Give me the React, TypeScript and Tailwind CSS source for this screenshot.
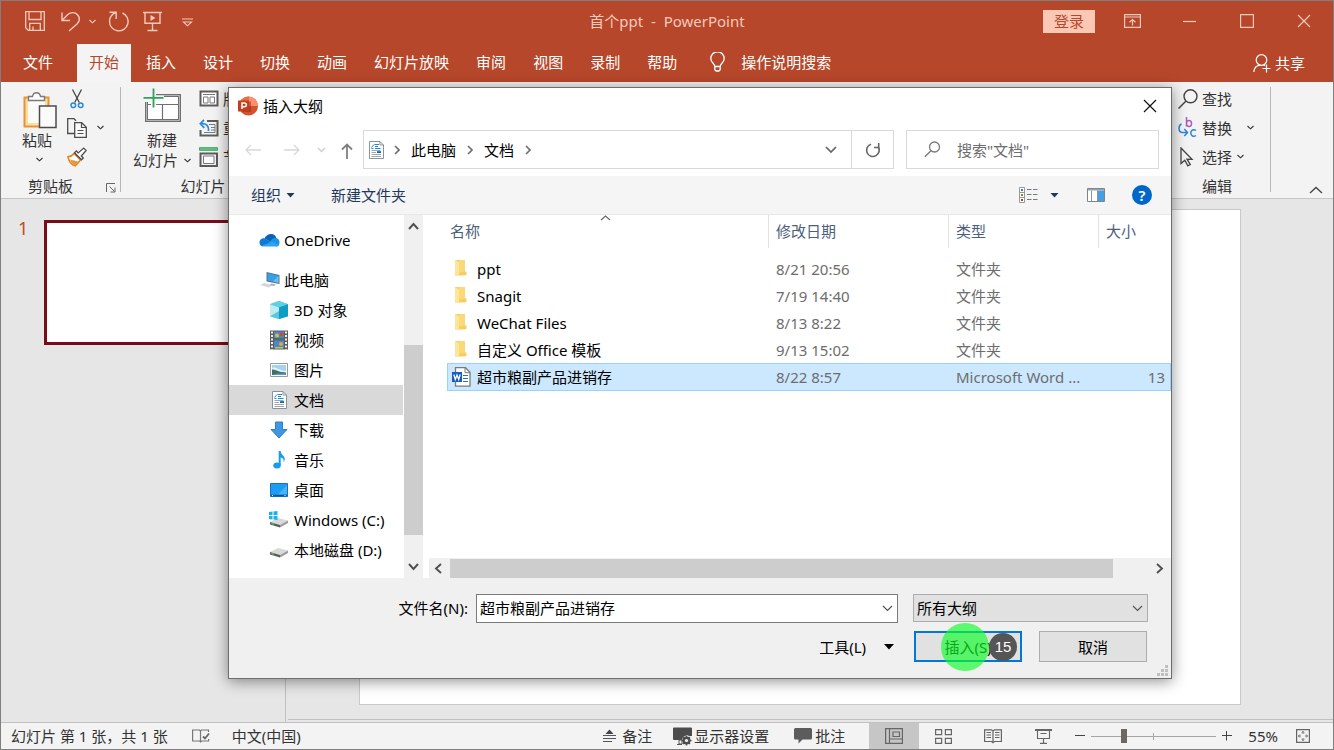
import type { ReactNode } from "react";

interface IconProps {
  w: number;
  h: number;
  children: ReactNode;
  className?: string;
}

const Icon = ({ w, h, children, className = "" }: IconProps) => (
  <svg
    width={w}
    height={h}
    viewBox={`0 0 ${w} ${h}`}
    fill="none"
    className={`shrink-0 ${className}`}
    aria-hidden="true"
  >
    {children}
  </svg>
);

const SmallChevron = ({ className = "" }: { className?: string }) => (
  <Icon w={7} h={5} className={className}>
    <path d="M0.5 1l3 2.8L6.5 1" stroke="currentColor" strokeWidth="1.1" />
  </Icon>
);

const Caret = ({ className = "" }: { className?: string }) => (
  <Icon w={9} h={5} className={className}>
    <path d="M0.5 0h8l-4 4.5z" fill="currentColor" />
  </Icon>
);

const WideChevron = ({ className = "" }: { className?: string }) => (
  <Icon w={11} h={7} className={className}>
    <path d="M1 1l4.5 4.5L10 1" stroke="currentColor" strokeWidth="1.2" />
  </Icon>
);

const CrumbChevron = () => (
  <Icon w={6} h={10} className="text-[#6d6d6d]">
    <path d="M1 1l4 4-4 4" stroke="currentColor" strokeWidth="1.6" />
  </Icon>
);

const DocumentIcon = () => (
  <Icon w={15} h={18}>
    <path d="M.5.5h10.500l3.500 3.500v13.500H.5z" fill="#fff" stroke="#8b9298" />
    <path d="M11 .5V4h3.500" stroke="#8b9298" />
    <path d="M5.500 3.500H10M2.500 7.500h2M6 7.500h5.500M8 10.500h4" stroke="#1a8ad8" />
    <path d="M2.500 6.500l2.500-3M6 5.500h3" stroke="#1a8ad8" />
    <path d="M8 11.500h4" stroke="#345b7c" />
    <path d="M2.500 9.500h9M2.500 11.500h4.500M2.500 13.500h9.500M2.500 15.500h9.500" stroke="#9aa8b3" />
  </Icon>
);

const WindowTitleBar = () => (
  <header className="grid h-10 grid-cols-[1fr_auto_1fr] items-center text-[#f6c9bb]">
    <div className="flex items-center pl-6">
      <button type="button" aria-label="保存">
        <Icon w={20} h={20}>
          <path d="M.7.7h18.600v18.600H3.200L.7 16.800z" stroke="currentColor" strokeWidth="1.300" />
          <path d="M4 .7v7.800h12V.7M4.700 19v-6.700h10.600V19M8 19v-3.500" stroke="currentColor" strokeWidth="1.300" />
        </Icon>
      </button>
      <button type="button" aria-label="撤消" className="ml-4">
        <Icon w={20} h={21}>
          <path d="M1 1.500v8h8M1.500 9L6 4.200C9 1 14 .8 16.500 3.800c2.600 3.100 2 6.700-.5 9.200l-8 7" stroke="currentColor" strokeWidth="1.400" />
        </Icon>
      </button>
      <button type="button" aria-label="撤消选项" className="ml-[8px]">
        <SmallChevron />
      </button>
      <button type="button" aria-label="重复" className="ml-3">
        <Icon w={22} h={21}>
          <path d="M1.500 1.200h6.700v6.800M8 1.500C4 3 1.500 6.500 1.500 10.500a9.300 9.300 0 1 0 13-8.500" stroke="currentColor" strokeWidth="1.400" />
        </Icon>
      </button>
      <button type="button" aria-label="从头开始" className="ml-[13px]">
        <Icon w={19} h={21}>
          <path d="M0 1.500h19M2 1.500v10.700h15V1.500M9.500 12v7M4.500 19.500h10" stroke="currentColor" strokeWidth="1.400" />
          <path d="M7.500 4l5 3-5 3z" fill="currentColor" />
        </Icon>
      </button>
      <button type="button" aria-label="自定义快速访问工具栏" className="ml-5 pt-[2px]">
        <Icon w={11} h={9}>
          <path d="M0 1h11M1.500 4l4 3.800L9.500 4z" stroke="currentColor" strokeWidth="1.100" />
        </Icon>
      </button>
    </div>
    <h1 className="whitespace-pre text-[15px] leading-5">首个ppt  -  PowerPoint</h1>
    <div className="flex items-center justify-end pr-px">
      <button type="button" className="mr-[9px] h-[23px] w-[52px] bg-[#fcc8b6] text-[15px] leading-5 text-[#b7472a]">
        登录
      </button>
      <button type="button" aria-label="功能区显示选项" className="flex h-10 w-[57px] items-center justify-center">
        <Icon w={17} h={14}>
          <path d="M.6.600h15.800v12.800H.6zM.6 3h15.800M8.500 11.500V5.500M5.500 8.200l3-2.700 3 2.700" stroke="currentColor" strokeWidth="1.200" />
        </Icon>
      </button>
      <button type="button" aria-label="最小化" className="flex h-10 w-[57px] items-center justify-center">
        <Icon w={13} h={3}>
          <path d="M0 1.500h13" stroke="currentColor" strokeWidth="1.200" />
        </Icon>
      </button>
      <button type="button" aria-label="最大化" className="flex h-10 w-[57px] items-center justify-center">
        <Icon w={14} h={14}>
          <path d="M.6.600h12.800v12.800H.6z" stroke="currentColor" strokeWidth="1.200" />
        </Icon>
      </button>
      <button type="button" aria-label="关闭" className="flex h-10 w-[57px] items-center justify-center">
        <Icon w={14} h={14}>
          <path d="M1 1l12 12M13 1L1 13" stroke="currentColor" strokeWidth="1.200" />
        </Icon>
      </button>
    </div>
  </header>
);

const tabs = ["开始", "插入", "设计", "切换", "动画", "幻灯片放映", "审阅", "视图", "录制", "帮助"];

const RibbonTabs = () => (
  <nav className="flex items-end pt-[3px] pr-7 pl-[10px] text-[15px] leading-5 whitespace-nowrap text-white">
    <button type="button" className="mr-3 h-[38px] px-3 pb-[2px]">
      文件
    </button>
    <div className="flex gap-[3px]">
      {tabs.map((tab) => (
        <button
          key={tab}
          type="button"
          className={`h-[38px] px-3 pb-[2px] ${tab === "开始" ? "bg-[#f4f4f4] text-[#b7472a]" : ""}`}
        >
          {tab}
        </button>
      ))}
    </div>
    <button type="button" className="ml-[21px] flex h-[38px] items-center gap-4 pb-[2px]">
      <Icon w={15} h={20}>
        <path d="M4.800 14.500c0-3-4-3.700-4-8a6.700 6.700 0 0 1 13.400 0c0 4.300-4 5-4 8v3.200L8.800 19H6.200l-1.400-1.300zM4.800 14.500h5.400" stroke="currentColor" strokeWidth="1.300" />
      </Icon>
      操作说明搜索
    </button>
    <button type="button" className="ml-auto flex h-[38px] items-center gap-1">
      <Icon w={18} h={19}>
        <circle cx="8.500" cy="6" r="5.300" stroke="currentColor" strokeWidth="1.200" />
        <path d="M.8 18c.4-4 3-6.500 6.500-6.800M10.500 10.800l1.500.9M13.500 10.500v8M9.500 14.500h8" stroke="currentColor" strokeWidth="1.200" />
      </Icon>
      共享
    </button>
  </nav>
);

const RibbonDivider = () => <div className="mt-[5px] h-[105px] w-px shrink-0 self-start bg-[#b8b8b8]" />;

const ClipboardGroup = () => (
  <section className="flex w-[119px] shrink-0 flex-col justify-between">
    <div className="flex">
      <button type="button" className="ml-[21px] flex flex-col items-start pt-[9px]">
        <Icon w={36} h={38}>
          <path d="M2.500 6.500h24v29h-24z" fill="#fbdf9d" stroke="#e8933a" strokeWidth="2" />
          <path d="M6 7h17v25H6z" fill="#fafafa" />
          <path d="M6.500 9.500V5.500h4C11 3 12.500 1.700 14.500 1.700S18 3 18.500 5.500h4v4z" fill="#fff" stroke="#7a7a7a" strokeWidth="1.400" />
          <path d="M17.500 15h16.500v21.500H17.500z" fill="#fafafa" stroke="#4c4c4c" strokeWidth="1.500" />
        </Icon>
        <span className="mt-px">粘贴</span>
        <SmallChevron className="mt-[7px] ml-[14px]" />
      </button>
      <div className="ml-[9px] flex flex-col pt-[2px]">
        <button type="button" aria-label="剪切" className="flex h-[29px] w-[20px] items-center justify-center">
          <Icon w={14} h={20}>
            <path d="M2.500.500l6.800 13M11.500.500L4.700 13.500" stroke="#444" strokeWidth="1.300" />
            <circle cx="3.300" cy="16.300" r="2.300" stroke="#2b88d8" strokeWidth="1.500" />
            <circle cx="10.700" cy="16.300" r="2.300" stroke="#2b88d8" strokeWidth="1.500" />
          </Icon>
        </button>
        <button type="button" aria-label="复制" className="flex h-[29px] items-center gap-[10px]">
          <Icon w={20} h={20}>
            <path d="M7 15.500H.7V.700h6.300l2 2" stroke="#4c4c4c" strokeWidth="1.300" />
            <path d="M7.700 4.700h7l4.600 4.600v10H7.700z" fill="#fafafa" stroke="#4c4c4c" strokeWidth="1.300" />
            <path d="M14.500 4.700v4.800h4.800M10.500 12.500h6M10.500 15.500h6" stroke="#4c4c4c" strokeWidth="1.200" />
          </Icon>
          <SmallChevron />
        </button>
        <button type="button" aria-label="格式刷" className="flex h-[29px] w-[20px] items-center">
          <Icon w={20} h={20}>
            <path d="M7 6.500l6.500 6.500-5.200 5.800C5 18 2 14.500 1 9.800c2.600 0 4.400-1.300 6-3.300z" fill="#fff" stroke="#e57d1a" strokeWidth="1.500" />
            <path d="M3 12.500l8 2-3 4C5.800 17.500 4 15.500 3 12.500z" fill="#e8953a" />
            <path d="M7.500 5.800l7 7 1.800-1.800-2-2 4.800-5.500-2.400-2.400-5.500 4.800-1.800-1.900z" fill="#fff" stroke="#4c4c4c" strokeWidth="1.300" />
          </Icon>
        </button>
      </div>
    </div>
    <div className="mb-[2px] flex h-5 items-center justify-between pr-1 pl-[27px]">
      <span>剪贴板</span>
      <button type="button" aria-label="剪贴板选项" className="pt-[3px]">
        <Icon w={10} h={10}>
          <path d="M.5 9V.500H9M3.500 3.500l5 5M9 4.500V9H4.500" stroke="#666" />
        </Icon>
      </button>
    </div>
  </section>
);

const SlidesGroup = () => (
  <section className="flex w-[164px] shrink-0 flex-col justify-between">
    <div className="flex">
      <button type="button" className="ml-3 flex w-[58px] flex-col items-center pt-[6px]">
        <Icon w={38} h={35}>
          <path d="M3.500 7.500h33v25h-33z" fill="#fff" stroke="#707070" strokeWidth="3" />
          <path d="M3.500 7.500h33v25h-33z" stroke="#b5b5b5" />
          <path d="M5 16.500h30M19.500 16.500V31" stroke="#707070" strokeWidth="1.200" />
          <path d="M0 0h20v6H0zM0 6h8v8H0z" fill="#f3f3f3" />
          <path d="M8 5h5v14H8zM2 7.500h19v5H2z" fill="#f6f6f6" />
          <path d="M10.500.500v19M.5 9.800h20" stroke="#2fa15c" strokeWidth="1.800" />
        </Icon>
        <span className="mt-[7px]">新建</span>
        <span className="flex items-center gap-[6px]">
          幻灯片
          <SmallChevron />
        </span>
      </button>
      <div className="ml-[8px] flex flex-col pt-[2px] whitespace-nowrap">
        <button type="button" className="flex h-[29px] items-center gap-1">
          <Icon w={20} h={17}>
            <path d="M1.500 1.500h17v14h-17z" fill="#fff" stroke="#5c5c5c" strokeWidth="2" />
            <path d="M4 4.500h12M4.500 7h4.500v6H4.500zM11 7h4.500v6H11z" stroke="#7a7a7a" />
          </Icon>
          版式
        </button>
        <button type="button" className="flex h-[29px] items-center gap-1">
          <Icon w={20} h={18}>
            <path d="M8 2h10.500v14.500h-17V11" stroke="#5c5c5c" strokeWidth="2" />
            <path d="M10 5.500h6v8H5M12 8.500h4M12 11h4" stroke="#7a7a7a" />
            <path d="M5 .800L1.300 4.800l4 4M1.500 4.800c5-.8 8.500 1.500 8 7.200" stroke="#2b88d8" strokeWidth="1.700" />
          </Icon>
          重置
        </button>
        <button type="button" className="flex h-[29px] items-center gap-1">
          <Icon w={20} h={20}>
            <path d="M.5.700h18v2.600H.5z" fill="#6cc08b" stroke="#3da865" />
            <path d="M1.500 6.500h16.500v12.500H1.500z" stroke="#5c5c5c" strokeWidth="2" />
            <path d="M4.500 9h10.500v7.500H4.500z" fill="#fff" stroke="#7a7a7a" />
          </Icon>
          节
        </button>
      </div>
    </div>
    <span className="mb-[2px] text-center">幻灯片</span>
  </section>
);

const EditingGroup = () => (
  <section className="flex w-[92px] shrink-0 flex-col justify-between whitespace-nowrap">
    <div className="flex flex-col pt-[2px]">
      <button type="button" className="flex h-[29px] items-center gap-1">
        <Icon w={20} h={20}>
          <circle cx="12.500" cy="7.300" r="6.500" stroke="#444" strokeWidth="1.400" />
          <path d="M8 12l-7.500 7.500" stroke="#444" strokeWidth="1.500" />
        </Icon>
        查找
      </button>
      <button type="button" className="flex h-[29px] items-center gap-1">
        <Icon w={20} h={21}>
          <path d="M8.500 0v9.500M8.500 6.500c0-4 5-4 5 0s-5 4-5 0" stroke="#a860b8" strokeWidth="1.500" />
          <path d="M18 13.500c-2.500-1.800-5.200-.3-5.200 2.500s2.700 4.300 5.200 2.500" stroke="#2b88d8" strokeWidth="1.500" />
          <path d="M3.500 7C.3 8 0 15 4 15.500h5M6.300 12L9.500 15.500l-3.200 3.500" stroke="#2b88d8" strokeWidth="1.500" />
        </Icon>
        替换
        <SmallChevron className="ml-[11px]" />
      </button>
      <button type="button" className="flex h-[29px] items-center gap-1">
        <Icon w={20} h={20}>
          <path d="M3 1l11 11.300-5-.2 3.300 5.500-2.500 1.300-3-5.700L3 16.500z" stroke="#444" strokeWidth="1.300" />
        </Icon>
        选择
        <SmallChevron className="ml-px" />
      </button>
    </div>
    <span className="mb-[2px] pl-6">编辑</span>
  </section>
);

const Ribbon = () => (
  <div className="flex h-[117px] border-b border-[#c6c6c6] bg-[#f3f3f3] text-[15px] leading-5 text-[#333]">
    <ClipboardGroup />
    <RibbonDivider />
    <SlidesGroup />
    <RibbonDivider />
    <div className="ml-auto flex">
      <EditingGroup />
      <RibbonDivider />
      <div className="flex w-[62px] items-end justify-end pr-[10px] pb-[4px]">
        <button type="button" aria-label="折叠功能区">
          <Icon w={14} h={8}>
            <path d="M1 7l6-5.500L13 7" stroke="#444" strokeWidth="1.300" />
          </Icon>
        </button>
      </div>
    </div>
  </div>
);

const Workspace = () => (
  <main className="flex flex-1 bg-[#e6e6e6]">
    <aside className="flex w-[285px] shrink-0 gap-[16px] border-r border-[#c0c0c0] pt-[21px] pr-[18px] pl-[17px]">
      <span className="text-[18px] leading-4 text-[#c4472b]">1</span>
      <button type="button" aria-label="幻灯片 1" className="aspect-video flex-1 self-start border-[3px] border-[#7a0c1a] bg-white" />
    </aside>
    <div className="flex flex-1 flex-col">
      <div className="flex-1 pt-[10px] pr-[92px] pl-[73px]">
        <div className="aspect-video border border-[#c9c9c9] bg-white" />
      </div>
      <div className="mb-[2px] ml-[2px] h-px bg-[#c0c0c0]" />
    </div>
  </main>
);

const StatusBar = () => (
  <footer className="flex h-[27px] items-center border-t border-[#c0c0c0] bg-[#f3f3f3] pr-[23px] pl-[10px] text-[15px] leading-5 whitespace-nowrap text-[#333]">
    <span>幻灯片 第 1 张，共 1 张</span>
    <button type="button" aria-label="拼写检查" className="ml-6">
      <Icon w={18} h={15}>
        <path d="M8.500 13V2L7.500 1H.6v11h7l1 1 1-1h7v-2M8.500 2l1-1h7v2" stroke="#777" strokeWidth="1.200" />
        <path d="M11 7.500l2 2 4-5" stroke="#666" strokeWidth="1.800" />
      </Icon>
    </button>
    <button type="button" className="ml-[22px]">
      中文(中国)
    </button>
    <div className="ml-auto flex h-full items-center">
      <button type="button" className="flex items-center gap-[6px]">
        <Icon w={13} h={14}>
          <path d="M2.500 5l4-4.500 4 4.500z" fill="#444" />
          <path d="M0 6.500h13M0 9.500h13M0 12.500h9" stroke="#555" strokeWidth="1.100" />
        </Icon>
        备注
      </button>
      <button type="button" className="ml-[21px] flex items-center gap-[2px]">
        <Icon w={19} h={19}>
          <path d="M0 1.500Q0 .500 1 .500h17q1 0 1 1V9h-3l-2-1-4 2-1 3H1q-1 0-1-1z" fill="#4c4c4c" />
          <path d="M4 17.500h5M6 13h3v4H6z" stroke="#555" />
          <circle cx="13.500" cy="13.500" r="3" stroke="#4c4c4c" strokeWidth="2" />
          <path d="M13.500 8.500v10M8.500 13.500h10M10 10l7 7M17 10l-7 7" stroke="#4c4c4c" strokeWidth="1.400" />
          <circle cx="13.500" cy="13.500" r="1.600" fill="#f3f3f3" />
        </Icon>
        显示器设置
      </button>
      <button type="button" className="ml-[25px] flex items-center gap-[3px]">
        <Icon w={18} h={16}>
          <path d="M1.500 0h15Q18 0 18 1.500v8.500q0 1.500-1.500 1.500H8.500L4.500 15.500v-4h-3Q0 11.500 0 10V1.500Q0 0 1.500 0z" fill="#5c5c5c" />
        </Icon>
        批注
      </button>
      <button type="button" aria-label="普通视图" className="ml-6 flex h-full w-[50px] items-center justify-center bg-[#c6c6c6]">
        <Icon w={18} h={16}>
          <path d="M.6.600h16.800v14.800H.6zM4.500.600v14.800M4.500 11h13M8 4h6.500v4.500H8z" stroke="#666" strokeWidth="1.200" />
        </Icon>
      </button>
      <button type="button" aria-label="幻灯片浏览" className="flex h-full w-[48px] items-center justify-center">
        <Icon w={17} h={15}>
          <path d="M.6.600h6v5h-6zM10.400.600h6v5h-6zM.6 9.400h6v5h-6zM10.400 9.400h6v5h-6z" stroke="#666" strokeWidth="1.200" />
        </Icon>
      </button>
      <button type="button" aria-label="阅读视图" className="flex h-full w-[52px] items-center justify-center">
        <Icon w={18} h={15}>
          <path d="M9 14V2L7.500.800H.6V12.500h7L9 13.800l1.400-1.300h7V.800h-6.900L9 2" stroke="#666" strokeWidth="1.200" />
          <path d="M2.500 3.500h4.500M2.500 6h4.500M2.500 8.500h4.500M11 3.500h4.500M11 6h4.500M11 8.500h4.500" stroke="#666" />
        </Icon>
      </button>
      <button type="button" aria-label="幻灯片放映" className="flex h-full w-[48px] items-center justify-center">
        <Icon w={17} h={15}>
          <path d="M0 1h17" stroke="#666" strokeWidth="2" />
          <path d="M2.500 2v7.500h12V2M5.500 4.500h6M8.500 10v4M5 14.400h7" stroke="#666" strokeWidth="1.100" />
        </Icon>
      </button>
      <button type="button" aria-label="缩小" className="ml-[8px]">
        <Icon w={10} h={10}>
          <path d="M0 4.500h10" stroke="#444" />
        </Icon>
      </button>
      <input
        type="range"
        aria-label="缩放"
        min={0}
        max={100}
        defaultValue={25}
        className="mx-[6px] h-[14px] w-[125px] appearance-none bg-[linear-gradient(#a6a6a6,#a6a6a6),linear-gradient(#a6a6a6,#a6a6a6)] bg-[length:100%_1px,1px_7px] bg-center bg-no-repeat [&::-webkit-slider-thumb]:h-[14px] [&::-webkit-slider-thumb]:w-[6px] [&::-webkit-slider-thumb]:appearance-none [&::-webkit-slider-thumb]:bg-[#6b6864]"
      />
      <button type="button" aria-label="放大">
        <Icon w={10} h={10}>
          <path d="M0 4.500h10M4.500 0v9.500" stroke="#444" />
        </Icon>
      </button>
      <span className="ml-4">55%</span>
      <button type="button" aria-label="适应窗口大小" className="ml-[18px]">
        <Icon w={14} h={14}>
          <path d="M.6.600h12.800v12.800H.6z" stroke="#666" strokeWidth="1.200" />
          <path d="M7 2.500V5M7 9v2.500M2.500 7H5M9 7h2.500M5.500 3.800L7 2.500l1.500 1.300M5.500 10.200L7 11.500l1.500-1.300M3.800 5.500L2.500 7l1.300 1.500M10.200 5.500L11.500 7l-1.300 1.500" stroke="#666" strokeWidth=".9" />
        </Icon>
      </button>
    </div>
  </footer>
);

const DialogNavigation = () => (
  <div className="flex h-[52px] items-center pr-3 pb-px pl-4">
    <button type="button" aria-label="后退" className="text-[#d8d8d8]">
      <Icon w={16} h={12}>
        <path d="M1 6h15M6 1L1 6l5 5" stroke="currentColor" strokeWidth="1.300" />
      </Icon>
    </button>
    <button type="button" aria-label="前进" className="ml-[23px] text-[#d8d8d8]">
      <Icon w={16} h={12}>
        <path d="M0 6h15M10 1l5 5-5 5" stroke="currentColor" strokeWidth="1.300" />
      </Icon>
    </button>
    <button type="button" aria-label="最近的位置" className="ml-[17px] text-[#d0d0d0]">
      <Icon w={9} h={6}>
        <path d="M1 1l3.500 3.500L8 1" stroke="currentColor" strokeWidth="1.500" />
      </Icon>
    </button>
    <button type="button" aria-label="向上" className="ml-[15px] pt-[2px] text-[#808080]">
      <Icon w={12} h={16}>
        <path d="M6 16V1.500M1 6.500l5-5 5 5" stroke="currentColor" strokeWidth="1.800" />
      </Icon>
    </button>
    <div className="ml-[10px] flex h-[39px] flex-1 items-center border border-[#d9d9d9] pl-[5px]">
      <DocumentIcon />
      <div className="ml-[10px] flex items-center gap-[11px]">
        <CrumbChevron />
        <button type="button">此电脑</button>
        <CrumbChevron />
        <button type="button">文档</button>
        <CrumbChevron />
      </div>
      <button type="button" aria-label="以前的位置" className="ml-auto px-[14px] text-[#666]">
        <Icon w={12} h={8}>
          <path d="M1 1l5 5 5-5" stroke="currentColor" strokeWidth="1.700" />
        </Icon>
      </button>
      <button type="button" aria-label="刷新" className="flex h-full w-[42px] items-center justify-center border-l border-[#d9d9d9] text-[#666]">
        <Icon w={16} h={16}>
          <path d="M13 4.500a6.300 6.300 0 1 1-7-2.300" stroke="currentColor" strokeWidth="1.600" />
          <path d="M13.700 1v4.500H9" stroke="currentColor" strokeWidth="1.600" />
        </Icon>
      </button>
    </div>
    <label className="ml-3 flex h-[39px] w-[253px] items-center gap-[16px] border border-[#d9d9d9] pl-[17px]">
      <Icon w={17} h={17} className="text-[#7a7a7a]">
        <circle cx="10.500" cy="6" r="5" stroke="currentColor" strokeWidth="1.300" />
        <path d="M7 9.700L.8 15.800" stroke="currentColor" strokeWidth="1.400" />
      </Icon>
      <input
        type="search"
        aria-label="搜索"
        placeholder={'搜索"文档"'}
        className="min-w-0 flex-1 leading-5 outline-none placeholder:text-[#6d6d6d]"
      />
    </label>
  </div>
);

const DialogToolbar = () => (
  <div className="flex h-[39px] items-center border-b border-[#e8e8e8] bg-[#f5f5f5] pr-[19px] pl-[22px] text-[#1e395b]">
    <button type="button" className="flex items-center gap-[5px]">
      组织
      <Caret />
    </button>
    <button type="button" className="ml-9">
      新建文件夹
    </button>
    <button type="button" aria-label="更改视图" className="ml-auto">
      <Icon w={19} h={17}>
        <path d="M.5.500h5v15h-5zM.5 5.500h5M.5 10.500h5" fill="#fff" stroke="#999" />
        <path d="M2 2h2v2H2z" fill="#2f7fb8" />
        <path d="M2 7h2v2H2z" fill="#a5832a" />
        <path d="M2 12h2v2H2z" fill="#a5442a" />
        <path d="M8 2.500h4.500M14 2.500h4.500M8 7.500h4.500M14 7.500h4.500M8 12.500h4.500M14 12.500h4.500" stroke="#707b85" />
      </Icon>
    </button>
    <button type="button" aria-label="更多视图选项" className="ml-3">
      <Caret />
    </button>
    <button type="button" aria-label="预览窗格" className="ml-7">
      <Icon w={18} h={14}>
        <path d="M.5.500h17v13H.5z" fill="#fff" stroke="#7b858e" />
        <path d="M1 1h16v1.500H1z" fill="#9aa3ab" />
        <path d="M11 2.500h6v10.500h-6z" fill="#459fe3" />
        <path d="M4.500 2.500V13M10.500 2.500V13" stroke="#8e979f" />
      </Icon>
    </button>
    <button
      type="button"
      aria-label="帮助"
      className="ml-[27px] flex size-5 items-center justify-center rounded-full bg-[#0067c8] text-[15px] leading-5 font-semibold text-white"
    >
      ?
    </button>
  </div>
);

const DriveShape = () => (
  <>
    <path d="M1 11l8-4 10 2.500-8 4.500z" fill="#d9d9d9" />
    <path d="M1 11l10 3v2.500L1 13.500z" fill="#5a5f5c" />
    <path d="M11 14l8-4.500v2.500l-8 4.500z" fill="#9b9b9b" />
    <path d="M2.500 12.500l2.500.700" stroke="#58c46a" strokeWidth="1.200" />
  </>
);

const places: { name: string; icon: ReactNode }[] = [
  {
    name: "3D 对象",
    icon: (
      <Icon w={20} h={20}>
        <path d="M10 1l9 3.200v12L10 19l-9-2.800v-12z" fill="#2bb3d6" />
        <path d="M10 1l9 3.200L10 7.500 1 4.200z" fill="#5fd0e4" />
        <path d="M1 4.200l9 3.300V19l-9-2.800z" fill="#bfecf2" />
        <path d="M10 7.500l9-3.300v12L10 19z" fill="#0f9dc4" />
        <path d="M1 16.200L10 11v8z" fill="#57c9dc" />
      </Icon>
    ),
  },
  {
    name: "视频",
    icon: (
      <Icon w={20} h={20}>
        <path d="M1 .5h18v19H1z" fill="#5c5c5c" />
        <path d="M5 1.500h10v8H5zM5 10.500h10v8H5z" fill="#4a86d4" />
        <circle cx="8" cy="5.500" r="2" fill="#e0b93a" />
        <circle cx="12.500" cy="4.500" r="2" fill="#cf4a2a" />
        <path d="M5 8h10v1.500H5z" fill="#3f7a3d" />
        <circle cx="12" cy="14" r="2" fill="#e0a93a" />
        <path d="M6 17h8v1.500H6z" fill="#d8c13a" />
        <path d="M3 1.500v18M17 1.500v18" stroke="#fff" strokeWidth="1.800" strokeDasharray="2 1.500" />
      </Icon>
    ),
  },
  {
    name: "图片",
    icon: (
      <Icon w={20} h={16}>
        <path d="M1.500 1.500h17v13h-17z" fill="#fff" stroke="#9a9a9a" />
        <path d="M3 3h14v10H3z" fill="#a4d3f2" />
        <path d="M3 6c3-2 6 2 14 3v1H3z" fill="#e4f1fa" />
        <path d="M3 7.500c4 0 6 2.500 14 3.200V13H3z" fill="#3f7265" />
        <path d="M9 11.500h8V13H3z" fill="#5d9cc9" />
      </Icon>
    ),
  },
  { name: "文档", icon: <DocumentIcon /> },
  {
    name: "下载",
    icon: (
      <Icon w={18} h={18}>
        <path d="M5.500 1h7v7.500H17L9 17 1 8.500h4.500z" fill="#3d97e3" stroke="#2e7fc8" />
      </Icon>
    ),
  },
  {
    name: "音乐",
    icon: (
      <Icon w={12} h={18}>
        <ellipse cx="4" cy="14.500" rx="3.700" ry="3" fill="#139cf2" />
        <path d="M5.700 0h2c0 4 4 4.500 4 8 0 1.500-.5 2.500-1 3.200.3-3.200-1.200-4.200-3-4.700v8H5.700z" fill="#139cf2" />
      </Icon>
    ),
  },
  {
    name: "桌面",
    icon: (
      <Icon w={20} h={14}>
        <path d="M1.500.5h17v13h-17z" fill="#1a9df2" stroke="#1174bd" />
        <path d="M9 11.500L18 2v9.500z" fill="#47b4f7" />
        <path d="M2 12.500h16" stroke="#0c5a94" strokeWidth="1.500" />
        <path d="M3 12.500h1M15.500 12.500h1" stroke="#fff" />
      </Icon>
    ),
  },
  {
    name: "Windows (C:)",
    icon: (
      <Icon w={20} h={18}>
        <DriveShape />
        <path d="M0 1l3.500-.5v3.500H0zM4.500.400L8.500 0v4h-4zM0 5h3.500v3.500L0 8zM4.500 5h4v4l-4-.400z" fill="#17b3ea" />
      </Icon>
    ),
  },
  {
    name: "本地磁盘 (D:)",
    icon: (
      <Icon w={20} h={18}>
        <DriveShape />
      </Icon>
    ),
  },
];

const Sidebar = () => (
  <nav className="flex w-[174px] shrink-0 flex-col pt-[10px] pb-[13px] whitespace-nowrap text-black">
    <button type="button" className="flex h-[30px] items-center gap-1 pl-[30px]">
      <Icon w={21} h={14}>
        <path d="M5.500 5.500C7 2 10 .500 13 1c2.200.4 3.700 1.800 4.300 4L12 9z" fill="#0a63b8" />
        <path d="M.5 10C.2 7 2.500 5 5.500 5.200L13 9.500 3 13.200C1.500 12.700.7 11.500.5 10z" fill="#0f7ad6" />
        <path d="M12 7.500c1.500-2 3.500-3 5.500-2.500 2 .7 3 2.400 3 4.500 0 2.400-1.500 4-3.500 4l-6-4z" fill="#1c94e6" />
        <path d="M2.500 13L13 8.500l7 3.500c-.8 1-1.800 1.500-3 1.500H4.500c-.8 0-1.400-.1-2-.5z" fill="#2aa5f0" />
      </Icon>
      OneDrive
    </button>
    <button type="button" className="mt-[10px] flex h-[30px] items-center gap-1 pl-[31px]">
      <Icon w={20} h={18}>
        <path d="M6.500 1l13 3v9l-13-2.500z" fill="#5b7285" />
        <path d="M7.500 2.200l11 2.600v6.900l-11-2.200z" fill="#35a0ea" />
        <path d="M13 10.500l5.500 1.200V4.800z" fill="#6cbcf2" />
        <path d="M0 14l4-2 8.500 2-3.500 2.500z" fill="#d3d7da" />
        <path d="M11 12.500l5 1-2 1.500-4-.700z" fill="#a8afb5" />
      </Icon>
      此电脑
    </button>
    {places.map((place) => (
      <button
        key={place.name}
        type="button"
        className={`flex h-[30px] items-center gap-[5px] pl-10 ${place.name === "文档" ? "bg-[#d9d9d9]" : ""}`}
      >
        <span className="flex w-5 justify-center">{place.icon}</span>
        {place.name}
      </button>
    ))}
  </nav>
);

const SidebarScrollbar = () => (
  <div className="ml-px flex w-[19px] shrink-0 flex-col items-center bg-[#f0f0f0] text-[#505050]">
    <button type="button" aria-label="向上滚动" className="flex h-[22px] items-center">
      <Icon w={11} h={8}>
        <path d="M1 7l4.500-5L10 7" stroke="currentColor" strokeWidth="1.900" />
      </Icon>
    </button>
    <div className="mt-[108px] w-full flex-1 bg-[#cdcdcd]" />
    <div className="h-[21px]" />
    <button type="button" aria-label="向下滚动" className="flex h-[22px] items-center">
      <Icon w={11} h={8}>
        <path d="M1 1l4.500 5L10 1" stroke="currentColor" strokeWidth="1.900" />
      </Icon>
    </button>
  </div>
);

const FolderIcon = () => (
  <Icon w={19} h={19}>
    <path d="M3 1h9v13h1v2.500H3z" fill="#f6cf66" />
    <path d="M7 1h6v12.500H7z" fill="#fad978" />
    <path d="M3 1l4 2.500v13.500L3 15.500z" fill="#fde69c" />
    <path d="M12 12.500h2.500V16H7v-1.500z" fill="#f7cd60" />
  </Icon>
);

const WordIcon = () => (
  <Icon w={19} h={20}>
    <path d="M3.500.700h10l4.500 4.500v14H3.500z" fill="#fff" stroke="#7a7a7a" strokeWidth="1.300" />
    <path d="M13 .700v5h5" stroke="#7a7a7a" />
    <path d="M11 8.500h5M11 11.500h5M11 14.500h5" stroke="#2f6fc4" strokeWidth="1.200" />
    <path d="M0 5h10v10H0z" fill="#185abd" />
    <path d="M1.800 7.500l1.500 5L5 8l1.700 4.500 1.500-5" stroke="#fff" strokeWidth="1.300" />
  </Icon>
);

const files = [
  { name: "ppt", date: "8/21 20:56", type: "文件夹", size: "", folder: true },
  { name: "Snagit", date: "7/19 14:40", type: "文件夹", size: "", folder: true },
  { name: "WeChat Files", date: "8/13 8:22", type: "文件夹", size: "", folder: true },
  { name: "自定义 Office 模板", date: "9/13 15:02", type: "文件夹", size: "", folder: true },
  { name: "超市粮副产品进销存", date: "8/22 8:57", type: "Microsoft Word ...", size: "13", folder: false },
];

const FileTable = () => (
  <table className="ml-[18px] table-fixed border-separate border-spacing-0 self-stretch text-left whitespace-nowrap text-[#6d6d6d]">
    <colgroup>
      <col />
      <col className="w-[180px]" />
      <col className="w-[150px]" />
      <col className="w-[73px]" />
    </colgroup>
    <thead>
      <tr className="h-10 align-top text-[#4c607a]">
        <th className="p-0 font-normal">
          <div className="relative h-[33px] pl-[3px] leading-[33px]">
            名称
            <Icon w={11} h={6} className="absolute top-0 left-[153px]">
              <path d="M1 5l4.500-4L10 5" stroke="#666" strokeWidth="1.100" />
            </Icon>
          </div>
        </th>
        {["修改日期", "类型", "大小"].map((title) => (
          <th key={title} className="p-0 font-normal">
            <div className="h-[33px] border-l border-[#e2e2e2] pl-[7px] leading-[33px]">{title}</div>
          </th>
        ))}
      </tr>
    </thead>
    <tbody>
      {files.map((file) => (
        <tr
          key={file.name}
          className={file.folder ? "h-[27px]" : "h-[28px] bg-[#cce8ff] outline-1 -outline-offset-1 outline-[#99d1ff]"}
        >
          <td className="p-0 text-black">
            <div className="flex items-center gap-[6px] pl-[5px]">
              {file.folder ? <FolderIcon /> : <WordIcon />}
              {file.name}
            </div>
          </td>
          <td className="p-0 pl-2">{file.date}</td>
          <td className="p-0 pl-2">{file.type}</td>
          <td className="p-0 pr-[6px] text-right">{file.size}</td>
        </tr>
      ))}
    </tbody>
  </table>
);

const FileScrollbar = () => (
  <div className="flex h-5 items-center bg-[#f0f0f0] text-[#505050]">
    <button type="button" aria-label="向左滚动" className="flex w-[21px] justify-center pr-[3px]">
      <Icon w={8} h={11}>
        <path d="M7 1L2 5.500 7 10" stroke="currentColor" strokeWidth="1.900" />
      </Icon>
    </button>
    <div className="h-[19px] flex-1 bg-[#cdcdcd]" />
    <div className="w-9" />
    <button type="button" aria-label="向右滚动" className="flex w-[22px] justify-center">
      <Icon w={8} h={11}>
        <path d="M1 1l5 4.500L1 10" stroke="currentColor" strokeWidth="1.900" />
      </Icon>
    </button>
  </div>
);

const DialogFooter = () => (
  <div className="relative bg-[#f0f0f0] pt-4 pr-[23px] pb-4 text-black">
    <div className="flex items-start">
      <label htmlFor="file-name" className="w-[239px] text-right leading-7">
        文件名(N):
      </label>
      <div className="ml-2 flex h-[29px] flex-1 items-center border border-[#7a7a7a] bg-white">
        <input
          id="file-name"
          type="text"
          defaultValue="超市粮副产品进销存"
          className="min-w-0 flex-1 pb-px pl-[3px] leading-5 outline-none"
        />
        <button type="button" aria-label="文件名列表" className="px-[4px] text-[#555]">
          <WideChevron />
        </button>
      </div>
      <div className="relative ml-[15px] w-[235px]">
        <select
          aria-label="文件类型"
          className="h-[28px] w-full appearance-none border border-[#adadad] bg-[#e1e1e1] pl-[3px] leading-5 outline-none"
        >
          <option>所有大纲</option>
        </select>
        <WideChevron className="pointer-events-none absolute top-[11px] right-[5px] text-[#555]" />
      </div>
    </div>
    <div className="mt-[8px] flex items-center justify-end">
      <button type="button" className="flex items-center gap-[18px]">
        工具(L)
        <Icon w={10} h={6}>
          <path d="M0 0h10L5 5.500z" fill="#000" />
        </Icon>
      </button>
      <div className="relative ml-5">
        <button type="button" className="h-[31px] w-[108px] border-2 border-[#0078d7] bg-[#e1e1e1]">
          插入(S)
        </button>
        <span className="pointer-events-none absolute top-[-8px] left-[27px] size-12 rounded-full bg-[#0cfc26]/65" />
        <span className="pointer-events-none absolute top-[2px] left-[75px] size-7 rounded-full bg-[#555] text-center font-['Liberation_Sans',sans-serif] text-[15px] leading-7 text-white">
          15
        </span>
      </div>
      <button type="button" className="mr-px ml-[17px] h-[31px] w-[108px] border border-[#adadad] bg-[#e1e1e1]">
        取消
      </button>
    </div>
    <Icon w={12} h={12} className="absolute right-[3px] bottom-px">
      <path
        d="M9 0h3v3H9zM9 4h3v3H9zM9 8h3v3H9zM5 4h3v3H5zM5 8h3v3H5zM1 8h3v3H1z"
        fill="#bfbfbf"
      />
    </Icon>
  </div>
);

const InsertOutlineDialog = () => (
  <div
    role="dialog"
    aria-label="插入大纲"
    className="absolute top-[86px] right-[161px] left-[227px] border border-[#6e6e6e] bg-white text-[15px] leading-5 whitespace-nowrap text-black shadow-[0_2px_14px_rgba(0,0,0,0.45)]"
  >
    <div className="flex h-9 items-center pr-[14px] pl-[9px]">
      <Icon w={20} h={20}>
        <circle cx="10.500" cy="10" r="9.500" fill="#d35230" />
        <path d="M10.500.500A9.500 9.500 0 0 1 20 10h-9.500z" fill="#ff8f6b" />
        <path d="M10.500.500A9.500 9.500 0 0 0 1 10h9.500z" fill="#ed6c47" />
        <path d="M5 5.500h8v10.500H5z" fill="#8a2a16" opacity=".5" />
        <path d="M0 4.500h11v11H0z" fill="#c43e1c" />
        <path d="M4 13V7h2.300c2.800 0 2.800 3.700 0 3.700H4" stroke="#fff" strokeWidth="1.500" />
      </Icon>
      <h2 className="ml-[5px]">插入大纲</h2>
      <button type="button" aria-label="关闭" className="ml-auto">
        <Icon w={14} h={14}>
          <path d="M1 1l12 12M13 1L1 13" stroke="#111" strokeWidth="1.200" />
        </Icon>
      </button>
    </div>
    <DialogNavigation />
    <DialogToolbar />
    <div className="flex">
      <Sidebar />
      <SidebarScrollbar />
      <div className="ml-[6px] flex min-w-0 flex-1 flex-col">
        <FileTable />
        <div className="flex-1" />
        <FileScrollbar />
      </div>
    </div>
    <DialogFooter />
  </div>
);

const App = () => {
  return (
    <div className="relative flex min-h-screen flex-col overflow-hidden border border-[#7f7f7f] font-['Noto_Sans','Noto_Sans_CJK_SC',sans-serif]">
      <div className="bg-[#b7472a]">
        <WindowTitleBar />
        <RibbonTabs />
      </div>
      <Ribbon />
      <Workspace />
      <StatusBar />
      <InsertOutlineDialog />
    </div>
  );
};

export default App;
